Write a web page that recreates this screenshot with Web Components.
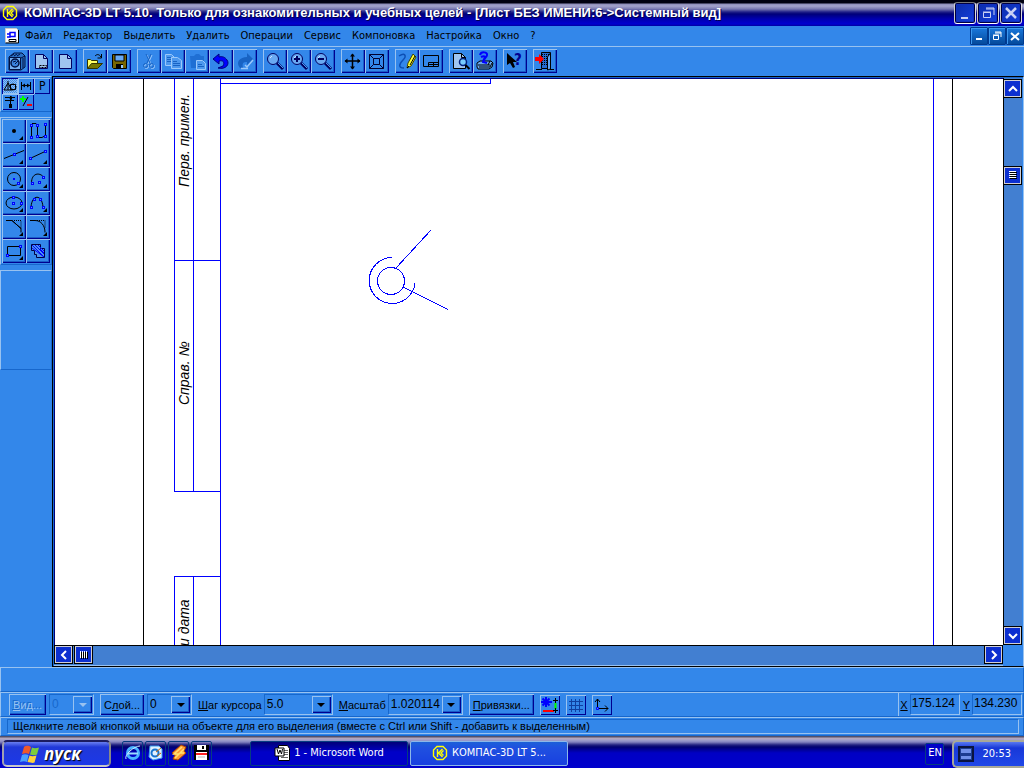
<!DOCTYPE html>
<html lang="ru">
<head>
<meta charset="utf-8">
<title>КОМПАС-3D LT 5.10</title>
<style>
  html, body { height: 100%; margin: 0; }
  body {
    --face: #3387ea;
    --light: #98c2f0;
    --shade: #1767cc;
    --navy: #000090;
    background: var(--face);
    color: #000;
    font: 11px/14px "DejaVu Sans Condensed", "Liberation Sans", sans-serif;
    overflow: hidden;
  }
</style>
</head>
<body>
<kompas-app></kompas-app>

<script>
const logo = `<g fill="none" stroke="#ff0" stroke-width="1.4"><path d="M5 1.500h6l3.500 3.500v6l-3.500 3.500h-6l-3.500-3.500v-6z"/><path d="M5.500 4v8M10.500 4l-4 4 4 4M11.500 5.500l-2.500 2.500 2.500 2.500"/></g>`;
const corner = `<path d="M21 17v4h-4z" fill="#000"/>`;
const dot = (x, y) => `<rect x="${x - 1}.5" y="${y - 1}.5" width="2" height="2" fill="#58a0f4" stroke="#00f"/>`;
const lens = (sign) => `<circle cx="10" cy="10" r="5.500" fill="#6aa9f2" stroke="#000060"/><path d="M7 9l2-2" stroke="#cfe4ff"/><path d="M14 14l6 6" stroke="#000060" stroke-width="3"/><path d="M15 14l5 5" stroke="#4d98ee"/>${sign}`;

// 24x24 unless the size attribute of the element says otherwise
const ICONS = {
  camera: `<path d="M4 8l5-4h8l3 3v11l-4 3h-12z" fill="#2a6fc4" stroke="#001040"/><path d="M4.500 8.500h11v12h-11z" fill="#74aef0" stroke="#001040"/><path d="M6 7l3-2M9 7l3-2M12 7l3-2M16 9l4-2M18 9v10" stroke="#001040"/><circle cx="10" cy="14" r="4" fill="#3a82dc" stroke="#001040" stroke-width="1.500"/><path d="M8 13l3-1M10 15l3-3" stroke="#001040"/>`,
  sheet: `<path d="M6.500 5.500h8l4 4v10h-12z" fill="#9fc5f0" stroke="#000060"/><path d="M14.500 5.500v4h4" fill="none" stroke="#000060"/><path d="M10.500 16.500h7v2h-7z" fill="none" stroke="#000" stroke-dasharray="2 1"/>`,
  page: `<path d="M6.500 5.500h8l4 4v10h-12z" fill="#9fc5f0" stroke="#000060"/><path d="M14.500 5.500v4h4" fill="none" stroke="#000060"/>`,
  open: `<path d="M4.500 19.500v-9h3l1 1h6v3" fill="#ff6" stroke="#330"/><path d="M4.500 19.500l4-5h11l-5 5z" fill="#770" stroke="#330"/><path d="M12 7c2-2 4-2 6 1M18.500 5v4h-4" fill="none" stroke="#000"/>`,
  save: `<path d="M5.500 5.500h14v14h-13l-1-1z" fill="#760" stroke="#000"/><path d="M8 6h9v6h-9z" fill="#6aaaf2" stroke="#000"/><path d="M9 15h7v4h-7z" fill="#000"/><path d="M14 16h2v3h-2z" fill="#9cf"/>`,
  cut: `<g fill="none" stroke="#9bc8fa"><path d="M10 6l4 9M15 6l-4 9"/><circle cx="9.500" cy="17.500" r="2"/><circle cx="15.500" cy="17.500" r="2"/></g><g fill="none" stroke="#1863c4"><path d="M9 5l4 9M14 5l-4 9"/><circle cx="8.500" cy="16.500" r="2"/><circle cx="14.500" cy="16.500" r="2"/></g>`,
  copy: `<g fill="#4d98ee" stroke="#9bc8fa"><path d="M4.500 5.500h6l3 3v8h-9z"/><path d="M6 8.500h4M6 10.500h5M6 12.500h5" stroke="#1863c4"/><path d="M10.500 8.500h6l4 3v8h-10z"/><path d="M12 12.500h4M12 14.500h7M12 16.500h7" stroke="#1863c4"/></g>`,
  paste: `<path d="M5 7h4l2-2h3l2 2h3v12h-13z" fill="#1f6fd4"/><path d="M11.500 11.500h6l3 3v6h-9z" fill="#4d98ee" stroke="#9bc8fa"/><path d="M13 15.500h4M13 17.500h6" stroke="#1863c4"/>`,
  undo: `<path d="M10 5l-6 5 6 5v-3c4-1 6 1 4 5l-5 2c8 2 12-4 9-8-2-3-5-4-8-3z" fill="#00f" stroke="#000080"/>`,
  redo: `<path d="M14 4l6 6-6 6v-3c-4 0-5 1-4 6h-3c-5-6 0-11 7-11z" fill="#1863c4"/><path d="M20 11l-6 7-2-2M8 19.500h7" fill="none" stroke="#9bc8fa" stroke-width="1.500"/>`,
  zoom: lens(''),
  zoomIn: lens('<path d="M7 10h6M10 7v6" stroke="#000060" stroke-width="2"/>'),
  zoomOut: lens('<path d="M7 10h6" stroke="#000060" stroke-width="2"/>'),
  pan: `<path d="M4 12h15M11.500 5v15" stroke="#000" stroke-width="1.500"/><path d="M9 7.500h5l-2.500-3zM9 17.500h5l-2.500 3zM6.500 9.500v5l-3-2.500zM16.500 9.500v5l3-2.500z"/>`,
  fit: `<path d="M4.500 5.500h14v14h-14zM8.500 9.500h6v6h-6zM4.500 5.500l4 4M18.500 5.500l-4 4M4.500 19.500l4-4M18.500 19.500l-4-4" fill="none" stroke="#000030"/>`,
  pencil: `<path d="M4 7c6-4 8 0 4 4s-5 8 1 8" fill="none" stroke="#0d4fb4" stroke-width="1.500"/><path d="M18 5l3 3-5 9-4 2 1-5z" fill="#ff3" stroke="#440"/><path d="M20 7l-5 9M12 19l2-2" stroke="#000"/>`,
  titleBlock: `<path d="M4.500 6.500h15v11h-15zM9.500 13.500h10M9.500 13.500v4M10 15.500h9M14.500 14v4" fill="none" stroke="#000"/>`,
  preview: `<path d="M4.500 4.500h8l4 4v11h-12z" fill="#9fc5f0" stroke="#000"/><path d="M12.500 4.500v4h4" fill="none" stroke="#000"/><circle cx="14" cy="13" r="3.500" fill="#7cf" stroke="#002080" stroke-width="1.500"/><path d="M16.500 16l4 4" stroke="#000" stroke-width="2"/>`,
  stamp: `<path d="M4 14l3-2h11l2 2-1 4-3 2h-11l-1-2z" fill="#69a8f0" stroke="#000"/><path d="M5 16h12M6 18h11M17 12l-2 4M17 18l2-4" stroke="#000"/><path d="M7 6c1-4 8-3 7 0 0 2-3 3-3 6M8 8c2-1 4-1 4 0s-2 3-2 5l4 1" fill="none" stroke="#00f" stroke-width="2"/>`,
  help: `<path d="M4 4v12l3-2 3 5 2-1-2-5h4z" fill="#000"/><text x="11" y="16" font-size="15" font-weight="700" fill="#000090">?</text>`,
  exit: `<path d="M8.500 3.500h9v16h-9z" fill="#246bd0" stroke="#000"/><path d="M9 5.500h8M9 7.500h8M9 9.500h8M9 11.500h8M9 13.500h8M9 15.500h8" stroke="#000" stroke-dasharray="1 1"/><path d="M14.500 8l3-4v16l-3 1zM3 20.500h6M17 20.500h4" fill="#5fa4f3" stroke="#000"/><path d="M2 8h4v-3l5 5-5 5v-3h-4z" fill="#f00"/>`,

  point: `<circle cx="12" cy="12" r="2"/>${corner}`,
  strokes: `<path d="M5.500 6v12M6 4.500h4l1.500 2v10M12 18.500h4l3.500-2v-11" fill="none" stroke="#000"/>${dot(5, 6)}${dot(11, 6)}${dot(19, 5)}${dot(5, 18)}${dot(11, 17)}${dot(19, 17)}`,
  line: `<path d="M2 15.500L22 7.500" stroke="#000"/>${dot(12, 11)}${corner}`,
  segment: `<path d="M4 15.500L19 8.500" stroke="#000"/>${dot(4, 15)}${dot(19, 8)}${corner}`,
  circle: `<circle cx="12" cy="12" r="6.500" fill="none" stroke="#000"/><path d="M11 11h2v2h-2z" fill="#00f"/>${dot(16, 16)}${corner}`,
  arc: `<path d="M5.500 16c0-10 8-11 12-6" fill="none" stroke="#000"/>${dot(6, 16)}${dot(13, 15)}${dot(17, 10)}${corner}`,
  ellipse: `<ellipse cx="12" cy="12" rx="8" ry="6" fill="none" stroke="#000"/>${dot(11, 6)}${dot(11, 12)}${dot(19, 12)}${corner}`,
  spline: `<path d="M5 16c1-13 11-13 12 0" fill="none" stroke="#000"/>${dot(5, 16)}${dot(8, 8)}${dot(14, 8)}${dot(17, 16)}${corner}`,
  chamfer: `<path d="M4 5.500h6l9 8v4M10 5.500l9 8" fill="none" stroke="#000"/><path d="M12 5.500h7v8" fill="none" stroke="#000" stroke-dasharray="1 1"/>${corner}`,
  fillet: `<path d="M4 5.500h5c6 0 10 5 10 12" fill="none" stroke="#000"/><path d="M11 5.500h8v8" fill="none" stroke="#000" stroke-dasharray="1 1"/>${corner}`,
  rect: `<path d="M5.500 7.500h13v9h-13z" fill="none" stroke="#000"/>${dot(18, 7)}${dot(5, 16)}${corner}`,
  hatch: `<path d="M5.500 5.500h9v4h4v9h-8v-3h-2v-4h-3z" fill="#4b94ee" stroke="#000040"/><path d="M6 6l12 12M9 6l9 9M12 6l6 6M6 9l12 9M14 10l4 4" stroke="#00f"/>`,

  geometry: `<path d="M2 12l4-7 4 7zM6 3v9" fill="none" stroke="#000"/><path d="M8.500 6.500h5v5h-5z" fill="none" stroke="#000"/><circle cx="11" cy="9" r="3" fill="none" stroke="#000"/>`,
  dims: `<path d="M3.500 4v8M12.500 4v8M4 7.500h9" stroke="#000"/><path d="M4 7.500l3-2v4zM12 7.500l-3-2v4z"/>`,
  param: `<text x="5" y="12" font-size="12">P</text>`,
  edit: `<path d="M3 3.500h10M3 6.500h9M8.500 2v8" stroke="#000"/><path d="M7 10h3v4h-3zM7 4l3-2v4z"/>`,
  plusMinus: `<path d="M2 5h6M5 2v6" stroke="#0f0" stroke-width="2"/><path d="M10 3l-5 9" stroke="#000"/><path d="M9 11h5" stroke="#f00" stroke-width="2"/>`,

  snap: `<path d="M6 2v10M1 7h11M2.500 3.500l7 7M9.500 3.500l-7 7" stroke="#00f" stroke-width="2"/><path d="M3 16h11" stroke="#f00" stroke-width="2"/><path d="M15.500 8v6" stroke="#0f0" stroke-width="2"/><path d="M13 5.500h5M15.500 3v5M13 15.500h5M15.500 13v5" stroke="#000"/>`,
  grid: `<path d="M3 6.500h14M3 10.500h14M3 14.500h14M5.500 4v13M9.500 4v13M13.500 4v13" stroke="#1040a0"/>`,
  axes: `<path d="M5.500 14v-10M3 7l2.500-3 2.500 3M6 13.500h10M13 10.500l3 3-3 3" fill="none" stroke="#000"/><path d="M4.500 12.500h2v2h-2z" fill="#58a0f4" stroke="#00f"/>`,

  logo,
  child: `<path d="M1.500.5h11l2 2v12h-13z" fill="#fff" stroke="#ccc"/><path d="M14.500 2v13h-13" fill="none" stroke="#000"/><path d="M3 6h3v3h-3M6 4.500h5v4h-5z" fill="none" stroke="#00f" stroke-width="1.500"/><path d="M5 11.500h7v2h-7z" fill="#fff" stroke="#000"/>`,
  ie: `<circle cx="9" cy="9" r="5.500" fill="none" stroke="#4ab4ff" stroke-width="3"/><path d="M4 9.500h10" stroke="#9adcff" stroke-width="2"/><path d="M2 15c-2-4 8-13 14-13" fill="none" stroke="#c8ecff"/>`,
  outlook: `<path d="M3 2h9l3 3v9l-9 2-4-3z" fill="#dff0ff" stroke="#3aa0f0"/><circle cx="8" cy="9" r="3.500" fill="none" stroke="#1674d0" stroke-width="2"/><path d="M9 8l5-4M10 12l4-3" stroke="#c60"/>`,
  winamp: `<path d="M11 1l5 2-2 4 2 2-8 7-5-1 2-4-3-2z" fill="#f93" stroke="#a40"/><path d="M12 3l-8 7h5l-4 4M14 5l-4 4h4" fill="none" stroke="#ffe070" stroke-width="1.500"/>`,
  floppy: `<path d="M1 1h15v15h-15z" fill="#000"/><path d="M4 1h9v5h-9z" fill="#fff"/><path d="M9 2h2v3h-2z" fill="#000"/><path d="M3 8h11v8h-11z" fill="#fff"/><path d="M3 9h11v2h-11z" fill="#f22"/><path d="M5 13h7" stroke="#bbb"/>`,
  word: `<path d="M4.500.5h9l2 3v12h-11z" fill="#fff" stroke="#000"/><path d="M10 5.500h4M10 7.500h4M10 9.500h4M7 12.500h7" stroke="#666"/><path d="M1 3h9v8h-9z" fill="#fff" stroke="#000"/><path d="M3 4l1.500 5 1.500-4 1.500 4 1-5" fill="none" stroke="#000"/>`,
  flag: `<path d="M4 3c3-2 5-1 7 0l-2 7c-2-1-4-1-7 0z" fill="#f0592a"/><path d="M12 3.500c2 1 4 1 7 0l-2 7c-2 1-4 1-7 0z" fill="#7ccc3c"/><path d="M2 11c2-1 4-1 6.500 0l-1.500 7c-2-1-4-1-7 0z" fill="#4aa0ff"/><path d="M9.500 11.500c2 1 4 1 7 0l-2 7c-2 1-4 0-7-.5z" fill="#ffd23c"/>`,
  tray: `<path d="M1 1h14v14h-14z" fill="#1c3c90" stroke="#0a1440" stroke-width="2"/><path d="M3 3h10v4h-10zM3 10h10v3h-10z" fill="#7090e8"/>`,

  minimize: `<path d="M6 14h7v2h-7z"/>`,
  restore: `<path d="M8 5h8v7M8 6h8" fill="none" stroke="currentColor"/><path d="M5.500 9.500h7v5h-7zM5 9h8" fill="none" stroke="currentColor"/>`,
  close: `<path d="M5 5l10 10M15 5l-10 10" stroke="currentColor" stroke-width="2.500"/>`,
  miniMin: `<path d="M5 10h6v2h-6z"/>`,
  miniRestore: `<path d="M6 4h6v5M6 5h6M4.500 7.500h5v4h-5zM4 7h6" fill="none" stroke="currentColor"/>`,
  miniClose: `<path d="M4 5l8 7M12 5l-8 7" stroke="currentColor" stroke-width="2"/>`,

  up: `<path d="M4 10l4-4 4 4" fill="none" stroke="#fff" stroke-width="2"/>`,
  down: `<path d="M4 6l4 4 4-4" fill="none" stroke="#fff" stroke-width="2"/>`,
  left: `<path d="M10 4l-4 4 4 4" fill="none" stroke="#fff" stroke-width="2"/>`,
  right: `<path d="M6 4l4 4-4 4" fill="none" stroke="#fff" stroke-width="2"/>`,
  gripV: `<path d="M4 4.500h7M4 6.500h7M4 8.500h7M4 10.500h7" stroke="#fff"/><path d="M5 5.500h7M5 7.500h7M5 9.500h7M5 11.500h7" stroke="#000"/>`,
  gripH: `<path d="M4.500 4v7M6.500 4v7M8.500 4v7M10.500 4v7" stroke="#fff"/><path d="M5.500 5v7M7.500 5v7M9.500 5v7M11.500 5v7" stroke="#000"/>`,
};

const svg = (name, size) =>
  `<svg width="${size}" height="${size}" viewBox="0 0 ${size} ${size}" fill="currentColor" aria-hidden="true">${ICONS[name]}</svg>`;

class PixelIcon extends HTMLElement {
  constructor() {
    super();
    this.attachShadow({mode: 'open'});
  }

  connectedCallback() {
    this.shadowRoot.innerHTML = `
      <style>
        :host { display: inline-flex; flex: none; }
        svg { display: block; }
      </style>
      ${svg(this.getAttribute('name'), this.getAttribute('size') || 16)}
    `;
  }
}

class ToolButton extends HTMLElement {
  constructor() {
    super();
    this.attachShadow({mode: 'open'});
  }

  connectedCallback() {
    const size = this.getAttribute('size') || 24;
    this.shadowRoot.innerHTML = `
      <style>
        :host { display: block; flex: none; }
        button {
          display: block;
          margin: 0;
          padding: 0;
          border: 0;
          font: inherit;
          color: #000;
          background: var(--face);
          box-shadow: inset 1px 1px var(--light), inset -1px -1px var(--navy);
        }
        :host(:not([size])) button {
          box-shadow: inset 1px 1px var(--light), inset -1px -1px var(--navy), inset -2px -2px #1a5cc8;
        }
        :host([pressed]) button {
          background: repeating-conic-gradient(#8dbdf2 0 25%, #4390ea 0 50%) 0 0 / 2px 2px;
          box-shadow: inset 1px 1px var(--navy), inset -1px -1px var(--light);
        }
        svg { display: block; }
      </style>
      <button type="button" aria-label="${this.getAttribute('label')}">${svg(this.getAttribute('icon'), size)}</button>
    `;
  }
}

class WindowButton extends HTMLElement {
  constructor() {
    super();
    this.attachShadow({mode: 'open'});
  }

  connectedCallback() {
    const mini = this.hasAttribute('mini');
    this.shadowRoot.innerHTML = `
      <style>
        :host { display: block; flex: none; }
        button {
          display: block;
          margin: 0;
          padding: 0;
          border: 1px solid;
          border-color: #777 #ddd #fff #ccc;
          border-radius: 3px;
          color: #c8d0f4;
          background: linear-gradient(135deg, #0b2ba8, #1440e0);
          box-shadow: inset 0 0 0 1px #000040, inset 0 0 0 2px #1030c0;
        }
        :host([mini]) button {
          border-color: #003a90;
          border-radius: 1px;
          color: #fff;
          background: linear-gradient(#1a78dc, #044a9c);
          box-shadow: inset 1px 1px #3c98f0;
        }
        svg { display: block; }
      </style>
      <button type="button" aria-label="${this.getAttribute('label')}">${svg(this.getAttribute('icon'), mini ? 16 : 20)}</button>
    `;
  }
}

class TitleBar extends HTMLElement {
  constructor() {
    super();
    this.attachShadow({mode: 'open'});
    this.shadowRoot.innerHTML = `
      <style>
        :host {
          display: flex;
          align-items: center;
          gap: 6px;
          height: 26px;
          box-sizing: border-box;
          padding: 0 2px;
          background: linear-gradient(#000010 0 3px, #8c8cb8 4px, #a4a4cc 6px, #7878b0 9px, #202088 12px, #000078 14px, #0000b0 19px, #0000d0 24px, #0000a0 26px);
        }
        h1 {
          flex: 1;
          margin: 0;
          color: #fff;
          font: bold 13px/16px "Liberation Sans", sans-serif;
          text-shadow: 1px 1px #000050;
          white-space: nowrap;
          overflow: hidden;
        }
        .buttons { display: flex; gap: 1px; }
      </style>
      <pixel-icon name="logo"></pixel-icon>
      <h1><slot></slot></h1>
      <div class="buttons">
        <window-button icon="minimize" label="Свернуть"></window-button>
        <window-button icon="restore" label="Восстановить"></window-button>
        <window-button icon="close" label="Закрыть"></window-button>
      </div>
    `;
  }
}

class MenuBar extends HTMLElement {
  constructor() {
    super();
    this.attachShadow({mode: 'open'});
    const items = ['Файл', 'Редактор', 'Выделить', 'Удалить', 'Операции', 'Сервис', 'Компоновка', 'Настройка', 'Окно', '?'];
    this.shadowRoot.innerHTML = `
      <style>
        :host {
          display: flex;
          align-items: center;
          height: 20px;
          padding: 0 0 0 4px;
          border-bottom: 1px solid var(--light);
        }
        nav { display: flex; flex: 1; gap: 11px; padding-left: 5px; }
        button {
          padding: 0;
          border: 0;
          background: none;
          color: #000;
          font: inherit;
        }
        .buttons { display: flex; }
      </style>
      <pixel-icon name="child"></pixel-icon>
      <nav>${items.map(i => `<button type="button">${i}</button>`).join('')}</nav>
      <div class="buttons">
        <window-button mini icon="miniMin" label="Свернуть лист"></window-button>
        <window-button mini icon="miniRestore" label="Восстановить лист"></window-button>
        <window-button mini icon="miniClose" label="Закрыть лист"></window-button>
      </div>
    `;
  }
}

class ToolBar extends HTMLElement {
  constructor() {
    super();
    this.attachShadow({mode: 'open'});
    const groups = [
      [['camera', 'Деталь'], ['sheet', 'Лист'], ['page', 'Фрагмент']],
      [['open', 'Открыть'], ['save', 'Сохранить']],
      [['cut', 'Вырезать'], ['copy', 'Копировать'], ['paste', 'Вставить'], ['undo', 'Отменить'], ['redo', 'Повторить']],
      [['zoom', 'Рамка'], ['zoomIn', 'Крупнее'], ['zoomOut', 'Мельче']],
      [['pan', 'Сдвинуть'], ['fit', 'Показать все']],
      [['pencil', 'Перестроить'], ['titleBlock', 'Основная надпись']],
      [['preview', 'Просмотр'], ['stamp', 'Печать']],
      [['help', 'Справка']],
      [['exit', 'Выход']],
    ];
    this.shadowRoot.innerHTML = `
      <style>
        :host { display: flex; gap: 6px; padding: 2px 5px 3px; }
        div { display: flex; }
      </style>
      ${groups.map(g => `<div>${g.map(([icon, label]) => `<tool-button icon="${icon}" label="${label}"></tool-button>`).join('')}</div>`).join('')}
    `;
  }
}

class ToolPalette extends HTMLElement {
  constructor() {
    super();
    this.attachShadow({mode: 'open'});
    const modes = [['geometry', 'Геометрия'], ['dims', 'Размеры'], ['param', 'Параметризация'], ['edit', 'Редактирование'], ['plusMinus', 'Выделение']];
    const tools = [
      ['point', 'Точка'], ['strokes', 'Непрерывный ввод'], ['line', 'Прямая'], ['segment', 'Отрезок'],
      ['circle', 'Окружность'], ['arc', 'Дуга'], ['ellipse', 'Эллипс'], ['spline', 'Сплайн'],
      ['chamfer', 'Фаска'], ['fillet', 'Скругление'], ['rect', 'Прямоугольник'], ['hatch', 'Штриховка'],
    ];
    this.shadowRoot.innerHTML = `
      <style>
        :host { display: flex; flex-direction: column; gap: 5px; width: 52px; }
        section {
          display: flex;
          flex-wrap: wrap;
          padding: 1px;
          border: 1px solid;
          border-color: var(--light) var(--shade) var(--shade) var(--light);
        }
        .empty { height: 96px; }
      </style>
      <section>${modes.map(([icon, label], i) => `<tool-button size="16" ${i ? '' : 'pressed'} icon="${icon}" label="${label}"></tool-button>`).join('')}</section>
      <section>${tools.map(([icon, label]) => `<tool-button icon="${icon}" label="${label}"></tool-button>`).join('')}</section>
      <section class="empty"></section>
    `;
  }
}

class DrawingSheet extends HTMLElement {
  constructor() {
    super();
    this.attachShadow({mode: 'open'});
    this.shadowRoot.innerHTML = `
      <style>
        :host { display: block; background: #fff; overflow: hidden; }
        svg { display: block; width: 100%; height: 100%; }
        text { font: italic 14px "Liberation Sans Narrow", "Liberation Sans", sans-serif; fill: #000; }
        .frame { fill: none; stroke: #00f; shape-rendering: crispEdges; }
        .edge { stroke: #000; shape-rendering: crispEdges; }
        .part { fill: none; stroke: #00f; shape-rendering: crispEdges; }
      </style>
      <svg>
        <line class="edge" x1="88.500" x2="88.500" y1="0" y2="100%"/>
        <line class="edge" x1="897.500" x2="897.500" y1="0" y2="100%"/>
        <line class="frame" x1="165.500" x2="165.500" y1="0" y2="100%"/>
        <line class="frame" x1="878.500" x2="878.500" y1="0" y2="100%"/>
        <path class="frame" d="M165 4.500h270.500v-5M119.500 0v412.500h46M138.500 0v412M119 181.500h46M119.500 600v-102.500h46M138.500 498v102"/>
        <text transform="translate(134 108) rotate(-90)">Перв. примен.</text>
        <text transform="translate(134 326) rotate(-90)">Справ. №</text>
        <text transform="translate(134 567) rotate(-90)">и дата</text>
        <circle class="part" cx="336" cy="202" r="13.500"/>
        <path class="part" d="M337 178.500a23 23 0 1 0 23 26M341 189l35-38M348 208l45 22.500"/>
      </svg>
    `;
  }
}

class ScrollBar extends HTMLElement {
  constructor() {
    super();
    this.attachShadow({mode: 'open'});
  }

  connectedCallback() {
    const vertical = this.hasAttribute('vertical');
    const before = this.getAttribute('before');
    const after = this.getAttribute('after');
    this.shadowRoot.innerHTML = `
      <style>
        :host { display: flex; background: #427fd1; justify-content: space-between; }
        :host([vertical]) { flex-direction: column; }
        button {
          flex: none;
          width: 19px;
          height: 19px;
          padding: 0;
          border: 1px solid #000;
          background: #0c2fd0;
          box-shadow: inset 0 0 0 1px #cfcfd8;
        }
        svg { display: block; margin: auto; }
        .before { flex: ${before}; }
        .after { flex: ${after}; }
      </style>
      <button type="button" aria-label="Назад">${svg(vertical ? 'up' : 'left', 16)}</button>
      <span class="before"></span>
      <button type="button" aria-label="Ползунок">${svg(vertical ? 'gripV' : 'gripH', 16)}</button>
      <span class="after"></span>
      <button type="button" aria-label="Вперед">${svg(vertical ? 'down' : 'right', 16)}</button>
    `;
  }
}

class DropList extends HTMLElement {
  constructor() {
    super();
    this.attachShadow({mode: 'open'});
  }

  connectedCallback() {
    const off = this.hasAttribute('disabled') ? 'disabled' : '';
    this.shadowRoot.innerHTML = `
      <style>
        :host { display: flex; align-items: center; gap: 2px; }
        .box {
          display: grid;
          grid-template-columns: 1fr 19px;
          width: 45px;
          height: 21px;
          box-sizing: border-box;
          padding: 1px;
          border: 1px solid;
          border-color: var(--shade) var(--light) var(--light) var(--shade);
        }
        :host([wide]) .box { width: 69px; }
        :host([wider]) .box { width: 75px; }
        select {
          grid-area: 1 / 1 / 2 / 3;
          appearance: none;
          padding: 0 0 2px 1px;
          border: 0;
          background: none;
          color: #000;
          font: 12px/14px "Liberation Sans", sans-serif;
          opacity: 1;
        }
        .arrow {
          grid-area: 1 / 2 / 2 / 3;
          display: grid;
          place-items: center;
          pointer-events: none;
          box-shadow: inset 1px 1px var(--light), inset -1px -1px var(--navy), inset -2px -2px #1a5cc8;
        }
        .arrow::before {
          content: "";
          border: 4px solid transparent;
          border-top-color: #000;
          border-bottom: 0;
        }
        :host([disabled]) select { color: var(--shade); }
        :host([disabled]) .arrow::before { border-top-color: var(--light); }
      </style>
      <label for="list"><slot></slot></label>
      <div class="box">
        <select id="list" aria-label="${this.getAttribute('label')}" ${off}><option>${this.getAttribute('value')}</option></select>
        <span class="arrow"></span>
      </div>
    `;
  }
}

class PushButton extends HTMLElement {
  constructor() {
    super();
    this.attachShadow({mode: 'open'});
  }

  connectedCallback() {
    this.shadowRoot.innerHTML = `
      <style>
        :host { display: block; }
        button {
          display: block;
          height: 21px;
          padding: 0 4px;
          border: 0;
          background: var(--face);
          color: #000;
          font: inherit;
          white-space: nowrap;
          box-shadow: inset 1px 1px var(--light), inset -1px -1px var(--navy), inset -2px -2px #1a5cc8;
        }
        button:disabled { color: var(--light); text-shadow: -1px -1px var(--shade); }
      </style>
      <button type="button" ${this.hasAttribute('disabled') ? 'disabled' : ''}><slot></slot></button>
    `;
  }
}

class CoordField extends HTMLElement {
  constructor() {
    super();
    this.attachShadow({mode: 'open'});
  }

  connectedCallback() {
    this.shadowRoot.innerHTML = `
      <style>
        :host { display: flex; align-items: center; gap: 2px; }
        label { text-decoration: underline; }
        input {
          width: 50px;
          height: 21px;
          box-sizing: border-box;
          padding: 0 0 3px 1px;
          border: 1px solid;
          border-color: var(--shade) var(--light) var(--light) var(--shade);
          background: none;
          color: #000;
          font: 12px/14px "Liberation Sans", sans-serif;
        }
      </style>
      <label for="value">${this.getAttribute('axis')}</label>
      <input id="value" type="text" value="${this.getAttribute('value')}">
    `;
  }
}

class StatusBar extends HTMLElement {
  constructor() {
    super();
    this.attachShadow({mode: 'open'});
    this.shadowRoot.innerHTML = `
      <style>
        :host { display: block; font-family: "Liberation Sans", sans-serif; }
        .row {
          display: flex;
          align-items: center;
          box-sizing: border-box;
          border: 1px solid;
          border-color: var(--light) var(--shade) var(--shade) var(--light);
        }
        .message { height: 25px; }
        .state { height: 25px; padding-left: 8px; }
        .controls { display: flex; flex: 1; align-items: center; gap: 6px; }
        .pair { display: flex; gap: 1px; }
        .coords { display: flex; gap: 3px; height: 23px; align-items: center; padding: 0 1px; border-left: 1px solid var(--light); }
        .hint { height: 19px; padding: 1px 4px 1px 6px; }
        .hint p {
          flex: 1;
          margin: 0;
          padding-left: 5px;
          border: 1px solid;
          border-color: var(--shade) var(--light) var(--light) var(--shade);
          white-space: nowrap;
          line-height: 13px;
        }
      </style>
      <div class="row message"></div>
      <div class="row state">
        <div class="controls">
          <div class="pair">
            <push-button disabled><u>В</u>ид...</push-button>
            <drop-list disabled label="Вид" value="0"></drop-list>
          </div>
          <div class="pair">
            <push-button>С<u>л</u>ой...</push-button>
            <drop-list label="Слой" value="0"></drop-list>
          </div>
          <drop-list wide label="Шаг курсора" value="5.0"><u>Ш</u>аг курсора</drop-list>
          <drop-list wider label="Масштаб" value="1.020114"><u>М</u>асштаб</drop-list>
          <push-button><u>П</u>ривязки...</push-button>
          <tool-button size="20" icon="snap" label="Глобальные привязки"></tool-button>
          <tool-button size="20" icon="grid" label="Сетка"></tool-button>
          <tool-button size="20" icon="axes" label="Система координат"></tool-button>
        </div>
        <div class="coords">
          <coord-field axis="X" value="175.124"></coord-field>
          <coord-field axis="Y" value="134.230"></coord-field>
        </div>
      </div>
      <div class="row hint"><p><slot></slot></p></div>
    `;
  }
}

class TaskBar extends HTMLElement {
  constructor() {
    super();
    this.attachShadow({mode: 'open'});
    const quick = [['ie', 'Internet Explorer'], ['outlook', 'Outlook Express'], ['winamp', 'Winamp'], ['floppy', 'Диск']];
    this.shadowRoot.innerHTML = `
      <style>
        :host {
          display: flex;
          align-items: center;
          height: 32px;
          box-sizing: border-box;
          padding: 3px 0 0 2px;
          color: #fff;
          background: linear-gradient(#50506c 0 1px, #b8a8b8 2px, #a0a0cc 4px, #8484c0 6px, #202080 9px, #000070 11px, #0000c4 17px, #0000cc);
        }
        button {
          display: flex;
          align-items: center;
          height: 25px;
          padding: 0 0 2px;
          border: 1px solid #063c80;
          border-radius: 2px;
          background: none;
          color: #fff;
          font: inherit;
        }
        .start {
          width: 109px;
          height: 27px;
          gap: 4px;
          padding: 0 0 0 16px;
          border: 2px solid;
          border-color: #1c1c60 #888 #c8c8c8 #a0a0b0;
          border-radius: 5px;
          background: linear-gradient(#6a80f0, #2038d8 5px, #1c38e8);
          font: italic bold 17px/20px "Open Sans", sans-serif;
          text-shadow: 1px 1px 1px #000;
        }
        .quick { display: flex; gap: 2px; padding: 0 38px 0 11px; }
        .quick button { width: 21px; justify-content: center; }
        .tasks { display: flex; flex: 1; gap: 2px; }
        .tasks button { flex: 0 1 158px; justify-content: center; gap: 4px; background: linear-gradient(#000078, #0000c8 10px); }
        .tasks .active { border-color: #8cb8e8; background: linear-gradient(#1c60d8, #2050e0 6px, #1840e0); }
        .lang { width: 19px; height: 22px; justify-content: center; margin-right: 8px; background: #0000c8; }
        .tray {
          display: flex;
          align-items: center;
          gap: 8px;
          height: 28px;
          box-sizing: border-box;
          padding: 0 13px 0 4px;
          border: 2px solid #a8a898;
          border-right: 0;
          border-radius: 5px 0 0 5px;
          background: linear-gradient(#5878f0, #1838d8 6px, #2048e8);
        }
      </style>
      <button type="button" class="start"><pixel-icon name="flag" size="20"></pixel-icon>пуск</button>
      <div class="quick">${quick.map(([icon, label]) => `<button type="button" aria-label="${label}"><pixel-icon name="${icon}" size="18"></pixel-icon></button>`).join('')}</div>
      <div class="tasks">
        <button type="button"><pixel-icon name="word"></pixel-icon>1 - Microsoft Word</button>
        <button type="button" class="active"><pixel-icon name="logo"></pixel-icon>КОМПАС-3D LT 5...</button>
      </div>
      <button type="button" class="lang">EN</button>
      <div class="tray"><pixel-icon name="tray"></pixel-icon><time>20:53</time></div>
    `;
  }
}

class KompasApp extends HTMLElement {
  constructor() {
    super();
    this.attachShadow({mode: 'open'});
    this.shadowRoot.innerHTML = `
      <style>
        :host { display: flex; flex-direction: column; height: 100vh; }
        main { display: flex; flex: 1; min-height: 0; }
        .view {
          flex: 1;
          display: grid;
          grid-template: 1fr auto / 1fr auto;
          min-width: 0;
          box-sizing: border-box;
          padding: 1px 1px 0 0;
          border: 1px solid #000;
          border-right-color: var(--light);
          box-shadow: inset 1px 1px var(--shade);
        }
        .view drawing-sheet { border: 1px solid #00007c; border-width: 1px 0 0 1px; margin-left: 1px; min-height: 0; }
        .view [vertical] { padding-top: 1px; box-shadow: inset 1px 0 #000; }
        .view .bottom { box-shadow: inset 0 1px #000; padding-bottom: 1px; border-bottom: 1px solid var(--light); margin-left: 1px; }
      </style>
      <title-bar>КОМПАС-3D LT 5.10. Только для ознакомительных и учебных целей - [Лист БЕЗ ИМЕНИ:6-&gt;Системный вид]</title-bar>
      <menu-bar></menu-bar>
      <tool-bar></tool-bar>
      <main>
        <tool-palette></tool-palette>
        <div class="view">
          <drawing-sheet></drawing-sheet>
          <scroll-bar vertical before="68" after="442"></scroll-bar>
          <scroll-bar class="bottom" before="1" after="890"></scroll-bar>
        </div>
      </main>
      <status-bar>Щелкните левой кнопкой мыши на объекте для его выделения (вместе с Ctrl или Shift - добавить к выделенным)</status-bar>
      <task-bar></task-bar>
    `;
  }
}

customElements.define('pixel-icon', PixelIcon);
customElements.define('tool-button', ToolButton);
customElements.define('window-button', WindowButton);
customElements.define('title-bar', TitleBar);
customElements.define('menu-bar', MenuBar);
customElements.define('tool-bar', ToolBar);
customElements.define('tool-palette', ToolPalette);
customElements.define('drawing-sheet', DrawingSheet);
customElements.define('scroll-bar', ScrollBar);
customElements.define('drop-list', DropList);
customElements.define('push-button', PushButton);
customElements.define('coord-field', CoordField);
customElements.define('status-bar', StatusBar);
customElements.define('task-bar', TaskBar);
customElements.define('kompas-app', KompasApp);
</script>
</body>
</html>
